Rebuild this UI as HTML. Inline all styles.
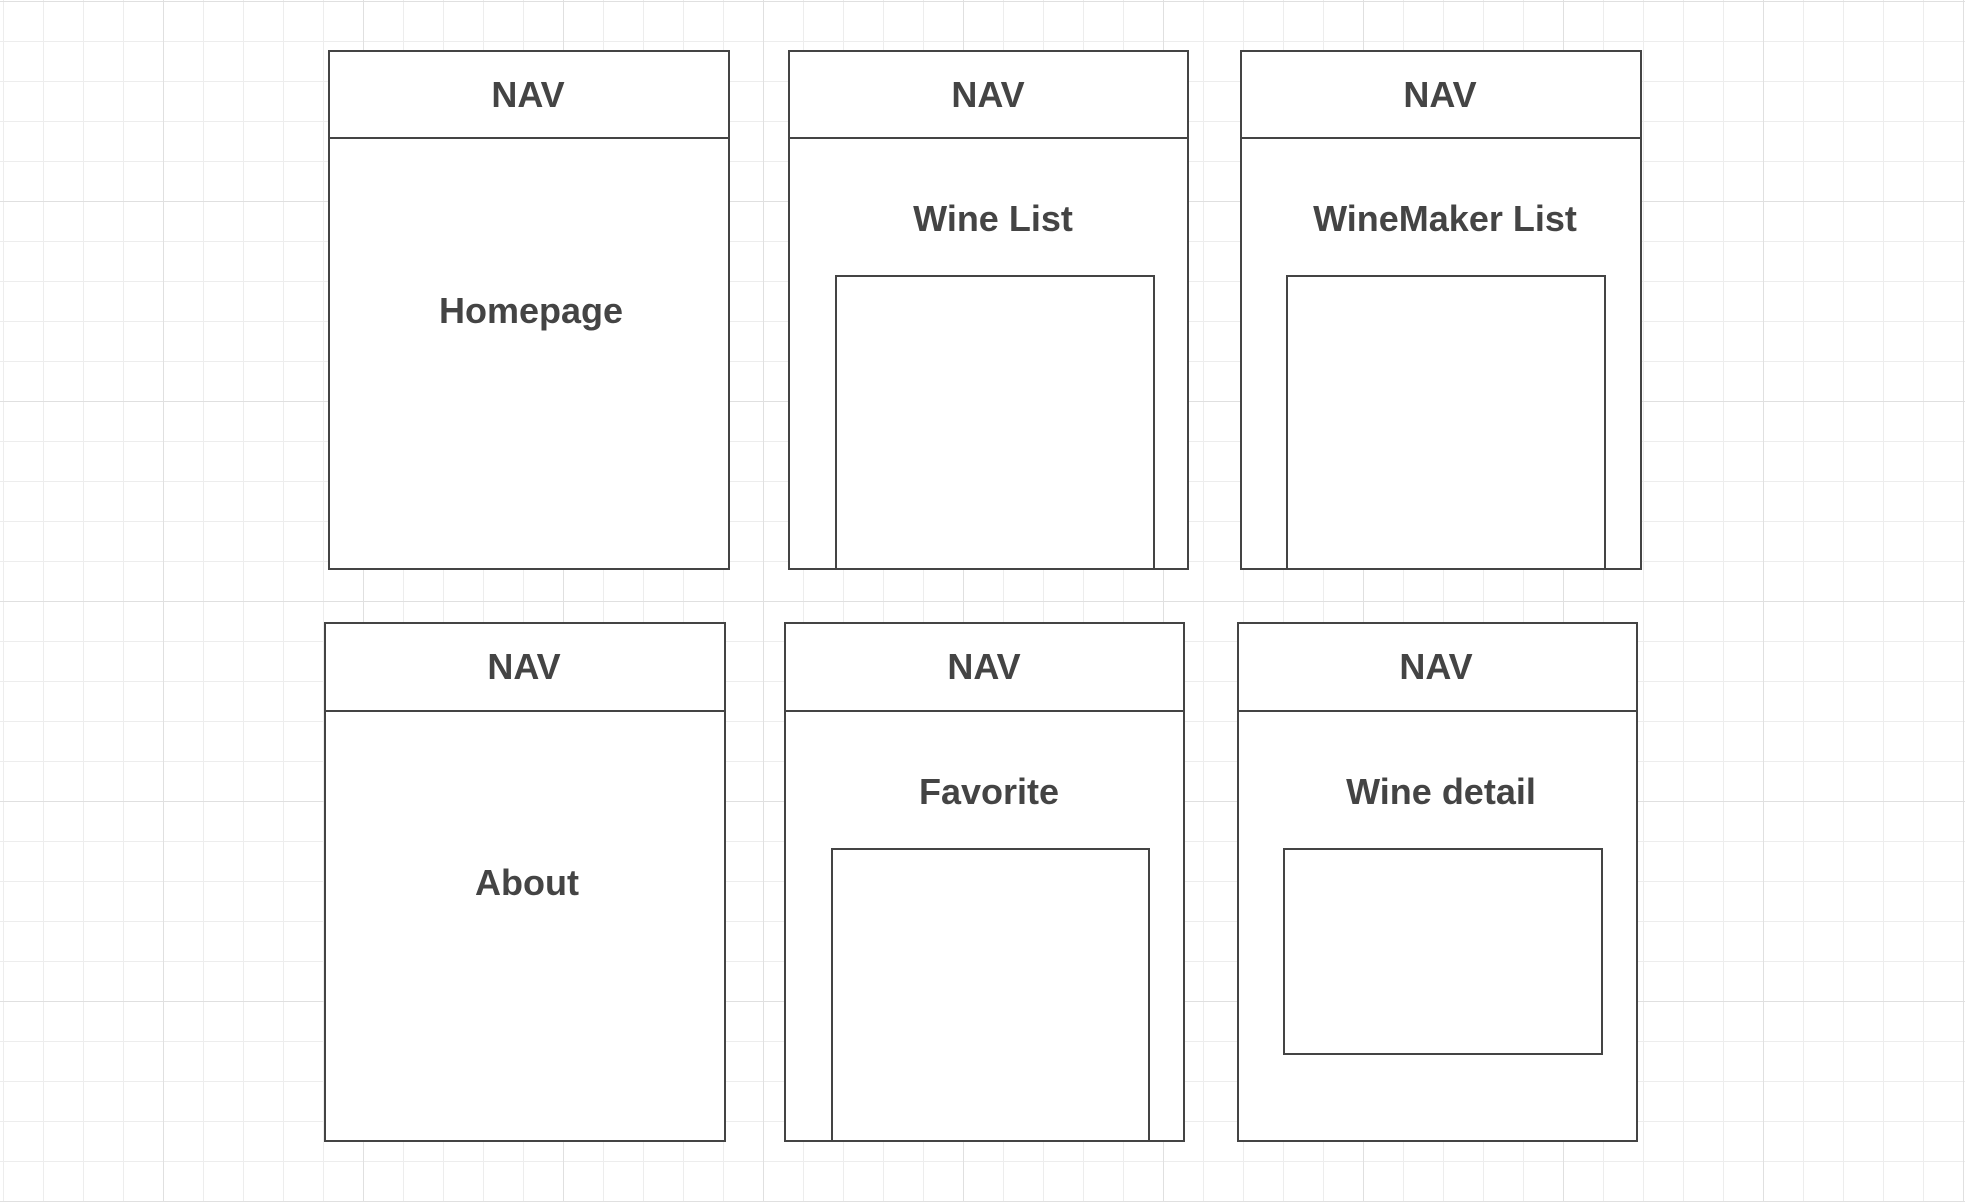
<!DOCTYPE html>
<html><head><meta charset="utf-8"><style>
html,body{margin:0;padding:0;width:1966px;height:1202px;overflow:hidden;background:#fff}
.grid{position:absolute;left:0;top:0;width:1965px;height:1202px;
background-image:
linear-gradient(to right,#e0e0e0 1px,transparent 1px),
linear-gradient(to bottom,#e0e0e0 1px,transparent 1px),
linear-gradient(to right,#ededed 1px,transparent 1px),
linear-gradient(to bottom,#ededed 1px,transparent 1px);
background-size:200px 100%,100% 200px,40px 100%,100% 40px;
background-position:163px 0,0 1px,3px 0,0 1px;}
.b{position:absolute;border:2px solid #444;box-sizing:border-box;background:#fff}
.i{position:absolute;border:2px solid #444;box-sizing:border-box;background:transparent}
.n{position:absolute;left:0;right:0;height:0;border-top:2px solid #444}
.t{position:absolute;width:600px;margin-left:-300px;text-align:center;height:40px;line-height:40px;font:bold 36px "Liberation Sans",sans-serif;color:#444;white-space:nowrap}
</style></head><body>
<div class="grid"></div>

<div class="b" style="left:328px;top:50px;width:402px;height:520px"><div class="n" style="top:85px"></div></div>
<div class="b" style="left:788px;top:50px;width:401px;height:520px"><div class="n" style="top:85px"></div>
  <div class="i" style="left:45px;top:223px;width:320px;height:295px;border-bottom:none"></div></div>
<div class="b" style="left:1240px;top:50px;width:402px;height:520px"><div class="n" style="top:85px"></div>
  <div class="i" style="left:44px;top:223px;width:320px;height:295px;border-bottom:none"></div></div>

<div class="b" style="left:324px;top:622px;width:402px;height:520px"><div class="n" style="top:86px"></div></div>
<div class="b" style="left:784px;top:622px;width:401px;height:520px"><div class="n" style="top:86px"></div>
  <div class="i" style="left:45px;top:224px;width:319px;height:294px;border-bottom:none"></div></div>
<div class="b" style="left:1237px;top:622px;width:401px;height:520px"><div class="n" style="top:86px"></div>
  <div class="i" style="left:44px;top:224px;width:320px;height:207px"></div></div>

<div class="t" style="left:528px;top:74px">NAV</div>
<div class="t" style="left:988px;top:74px">NAV</div>
<div class="t" style="left:1440px;top:74px">NAV</div>
<div class="t" style="left:524px;top:646px">NAV</div>
<div class="t" style="left:984px;top:646px">NAV</div>
<div class="t" style="left:1436px;top:646px">NAV</div>

<div class="t" style="left:531px;top:290px">Homepage</div>
<div class="t" style="left:993px;top:198px">Wine List</div>
<div class="t" style="left:1445px;top:198px">WineMaker List</div>
<div class="t" style="left:527px;top:862px">About</div>
<div class="t" style="left:989px;top:771px">Favorite</div>
<div class="t" style="left:1441px;top:771px">Wine detail</div>
</body></html>
